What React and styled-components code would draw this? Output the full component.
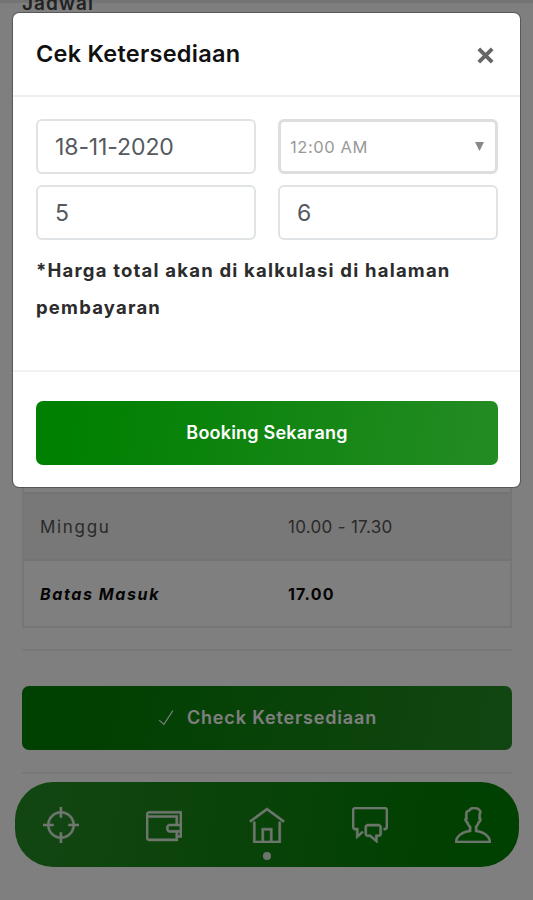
import React from 'react';
import styled, { createGlobalStyle } from 'styled-components';
import { TfiCheck, TfiTarget, TfiWallet, TfiHome, TfiComments, TfiUser } from 'react-icons/tfi';

const GlobalStyle = createGlobalStyle`
  * {
    box-sizing: border-box;
  }

  body {
    margin: 0;
    background: #fff;
    font-family: Inter, Roboto, sans-serif;
  }
`;

const Screen = styled.div`
  position: relative;
  width: 533px;
  height: 900px;
  overflow: hidden;
  background: linear-gradient(#e6e6e6 2px, #fff 4px);
`;

const Page = styled.main`
  height: 100%;
  padding: 0 21px 0 22px;
  display: flex;
  flex-direction: column;
  justify-content: flex-end;
`;

const SectionTitle = styled.h4`
  margin: 0 0 14px;
  color: #444;
  font-size: 19px;
  font-weight: 600;
  line-height: 24px;
  letter-spacing: 1.1px;
`;

const Schedule = styled.div`
  border: 2px solid #ececec;
  border-top: 0;
`;

const ScheduleRow = styled.div`
  height: 67px;
  padding: 0 16px;
  display: grid;
  grid-template-columns: 248px 1fr;
  align-items: center;
  color: ${props => (props.$bold ? '#0a0a0a' : '#555')};
  background: ${props => (props.$striped ? '#f0f0f0' : 'transparent')};
  border-top: 2px solid #e8e8e8;
  font-size: ${props => (props.$bold ? 16 : 17)}px;
  font-weight: ${props => (props.$bold ? 700 : 400)};
`;

const Day = styled.span`
  font-style: ${props => (props.$italic ? 'italic' : 'normal')};
  letter-spacing: ${props => (props.$italic ? 1.6 : 1.7)}px;
`;

const Hours = styled.span`
  letter-spacing: ${props => (props.$bold ? 1.2 : 0.3)}px;
`;

const Divider = styled.hr`
  width: 100%;
  height: 2px;
  margin: ${props => props.$margin};
  border: 0;
  background: #f1f1f1;
  flex-shrink: 0;
`;

const Button = styled.button`
  width: 100%;
  height: 64px;
  padding: 0 0 1px;
  display: flex;
  align-items: center;
  justify-content: center;
  gap: 12px;
  flex-shrink: 0;
  border: 0;
  border-radius: 7px;
  color: #fff;
  background: linear-gradient(100deg, #008000 8%, #228b22 94%);
  font-family: inherit;
  font-size: 18px;
  font-weight: 600;
  letter-spacing: ${props => props.$spacing || 0}px;
`;

const BottomNav = styled.nav`
  height: 85px;
  margin: 0 -7px 33px;
  padding: 0 26px;
  display: flex;
  align-items: center;
  justify-content: space-between;
  flex-shrink: 0;
  border-radius: 38px;
  color: #fff;
  background: linear-gradient(280deg, #008000 10%, #228b22 90%);
`;

const NavItem = styled.a`
  position: relative;
  width: 40px;
  height: 40px;
  display: flex;
  align-items: center;
  justify-content: center;
  opacity: 0.85;

  svg {
    width: 36px;
    height: 36px;
    stroke: currentColor;
    stroke-width: 0.25px;
  }
`;

const ActiveDot = styled.span`
  position: absolute;
  left: 16px;
  bottom: -15px;
  width: 8px;
  height: 8px;
  border-radius: 50%;
  background: #fff;
`;

const Backdrop = styled.div`
  position: absolute;
  inset: 0;
  padding: 12px;
  background: rgba(0, 0, 0, 0.5);
`;

const Modal = styled.section`
  width: 509px;
  height: 476px;
  display: flex;
  flex-direction: column;
  border: 1px solid rgba(0, 0, 0, 0.3);
  border-radius: 7px;
  background: #fff;
  background-clip: padding-box;
`;

const ModalHeader = styled.header`
  height: 84px;
  padding: 0 26px 0 23px;
  display: flex;
  align-items: center;
  justify-content: space-between;
  border-bottom: 2px solid #efefef;
`;

const ModalTitle = styled.h5`
  margin: 0;
  color: #111;
  font-size: 23.5px;
  font-weight: 600;
  line-height: 28px;
  letter-spacing: 0.25px;
`;

const CloseButton = styled.button`
  padding: 3px 0 0;
  display: flex;
  border: 0;
  color: #666;
  background: none;
`;

const ModalBody = styled.div`
  flex: 1;
  padding: 22px 22px 0 23px;
`;

const Fields = styled.div`
  display: grid;
  grid-template-columns: 220px 220px;
  grid-auto-rows: 55px;
  gap: 11px 22px;
`;

const Input = styled.input`
  width: 100%;
  min-width: 0;
  height: 55px;
  padding: 0 17px 0 17px;
  border: 2px solid #e0e3e5;
  border-radius: 6px;
  outline: 0;
  color: #555a5e;
  background: #fff;
  font: 400 23px Inter, sans-serif;
  letter-spacing: -0.1px;
`;

const Select = styled.div`
  height: 55px;
  padding: 0 11px 0 9px;
  display: flex;
  align-items: center;
  justify-content: space-between;
  border: 3px solid #dedede;
  border-radius: 6px;
  color: #999;
  font-size: 16.5px;
  letter-spacing: 0.6px;
`;

const Note = styled.p`
  margin: 12px 0 0;
  color: #2c2c2c;
  font-size: 18.5px;
  font-weight: 650;
  line-height: 37px;
  letter-spacing: 1.2px;
`;

const ModalFooter = styled.footer`
  height: 117px;
  padding: 29px 22px 0 23px;
  border-top: 2px solid #f1f1f1;
`;

const schedule = [
  { day: 'Sabtu', hours: '10.00 - 17.30' },
  { day: 'Minggu', hours: '10.00 - 17.30', striped: true },
  { day: 'Batas Masuk', hours: '17.00', bold: true },
];

const navItems = [
  { name: 'explore', icon: TfiTarget },
  { name: 'wallet', icon: TfiWallet },
  { name: 'home', icon: TfiHome, active: true },
  { name: 'chat', icon: TfiComments },
  { name: 'profile', icon: TfiUser },
];

// Rows for Senin - Jumat keep their height behind the dialog
const ScheduleSpacer = styled.div`
  height: 395px;
`;

const App = () => (
  <>
    <GlobalStyle />
    <Screen>
      <Page>
        <SectionTitle>Jadwal</SectionTitle>
        <Schedule>
          <ScheduleSpacer />
          {schedule.map(({ day, hours, striped, bold }) => (
            <ScheduleRow key={day} $striped={striped} $bold={bold}>
              <Day $italic={bold}>{day}</Day>
              <Hours $bold={bold}>{hours}</Hours>
            </ScheduleRow>
          ))}
        </Schedule>
        <Divider $margin="21px 0 35px" />
        <Button $spacing={0.85}>
          <TfiCheck size={18} />
          Check Ketersediaan
        </Button>
        <Divider $margin="22px 0 8px" />
        <BottomNav>
          {navItems.map(({ name, icon: Icon, active }) => (
            <NavItem key={name} aria-label={name}>
              <Icon />
              {active && <ActiveDot />}
            </NavItem>
          ))}
        </BottomNav>
      </Page>

      <Backdrop>
        <Modal role="dialog">
          <ModalHeader>
            <ModalTitle>Cek Ketersediaan</ModalTitle>
            <CloseButton aria-label="Close">
              <svg width="17" height="17" viewBox="0 0 17 17" stroke="currentColor" strokeWidth="3.8">
                <path d="M1.8 1.8l13.4 13.4M15.2 1.8L1.8 15.2" />
              </svg>
            </CloseButton>
          </ModalHeader>
          <ModalBody>
            <Fields>
              <Input defaultValue="18-11-2020" />
              <Select>
                <span>12:00 AM</span>
                <svg width="9" height="10" viewBox="0 0 9 10" fill="#888">
                  <path d="M0 0h9L4.5 9z" />
                </svg>
              </Select>
              <Input defaultValue="5" />
              <Input defaultValue="6" />
            </Fields>
            <Note>*Harga total akan di kalkulasi di halaman pembayaran</Note>
          </ModalBody>
          <ModalFooter>
            <Button $spacing={0.2}>Booking Sekarang</Button>
          </ModalFooter>
        </Modal>
      </Backdrop>
    </Screen>
  </>
);

export default App;
